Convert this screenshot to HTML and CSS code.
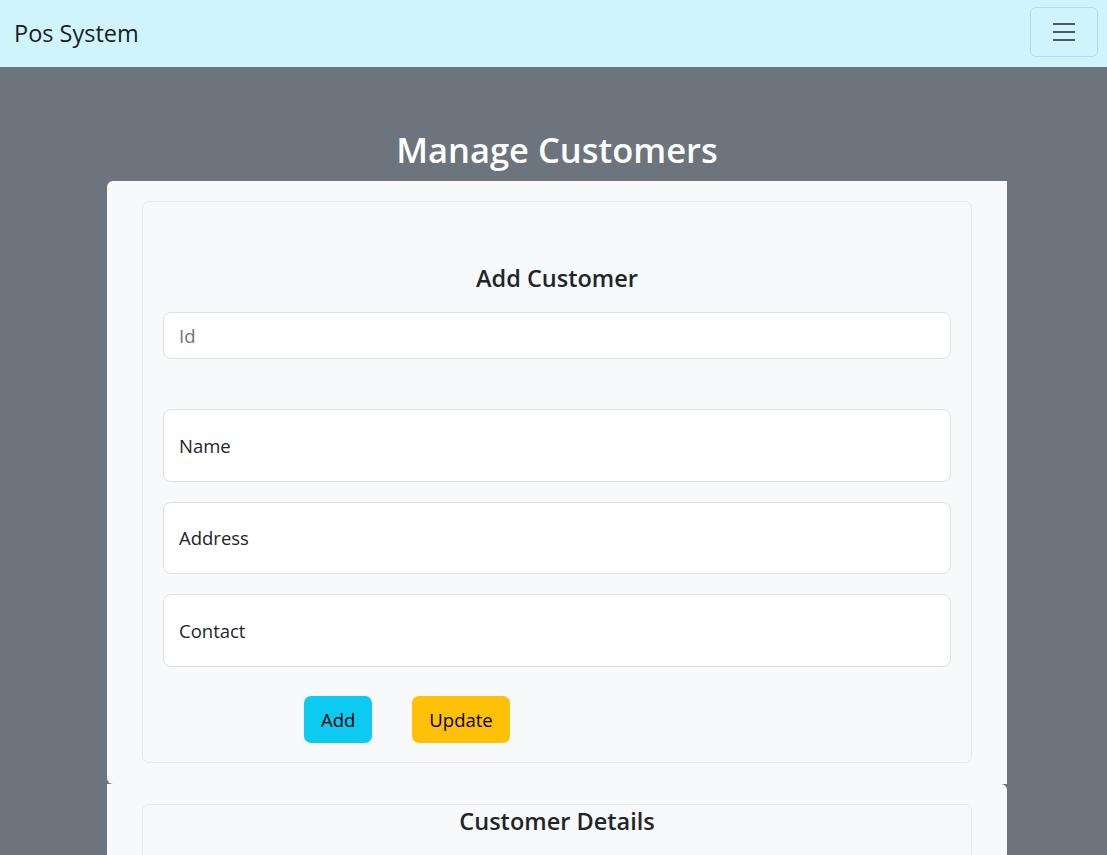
FILE: index.html
```html
<!DOCTYPE html>
<html lang="en">
<head>
<meta charset="utf-8">
<title>Pos System</title>
<link rel="stylesheet" href="styles.css">
</head>
<body>
<nav class="navbar">
  <a class="brand" href="#">Pos System</a>
  <button class="toggler" type="button" aria-label="Toggle navigation">
    <svg width="30" height="30" viewBox="0 0 30 30" aria-hidden="true">
      <path d="M4 7h22M4 15h22M4 23h22" stroke="rgba(33,37,41,0.75)" stroke-width="2" stroke-linecap="butt" fill="none"/>
    </svg>
  </button>
</nav>
<main class="main">
  <h1 class="page-title">Manage Customers</h1>
  <section class="panel panel-first">
    <div class="card">
      <h4 class="card-title card-title-add">Add Customer</h4>
      <input class="field field-id" type="text" placeholder="Id">
      <input class="field field-tall" type="text" placeholder="Name">
      <input class="field field-tall" type="text" placeholder="Address">
      <input class="field field-tall" type="text" placeholder="Contact">
      <div class="actions">
        <button class="btn btn-info" type="button">Add</button>
        <button class="btn btn-warning" type="button">Update</button>
      </div>
    </div>
  </section>
  <section class="panel panel-second">
    <div class="card card-details">
      <h4 class="card-title">Customer Details</h4>
    </div>
  </section>
</main>
</body>
</html>
```
FILE: styles.css
```css
* { box-sizing: border-box; }
html, body { margin: 0; padding: 0; }
body {
  background: #6c757d;
  font-family: "Open Sans", "Noto Sans", sans-serif;
  color: #212529;
  height: 855px;
  overflow: hidden;
}
.navbar {
  height: 67px;
  background: #cff4fc;
  display: flex;
  align-items: center;
  justify-content: space-between;
  padding: 0 9px 0 14px;
}
.brand {
  font-size: 23.5px;
  color: rgba(0,0,0,0.9);
  text-decoration: none;
  line-height: 1;
}
.toggler {
  width: 68px;
  height: 50px;
  background: transparent;
  border: 1px solid rgba(0,0,0,0.1);
  border-radius: 6px;
  display: flex;
  align-items: center;
  justify-content: center;
  padding: 0;
  align-self: flex-start;
  margin-top: 7px;
}
.toggler svg { display: block; }
.main {
  width: 900px;
  margin-left: 107px;
  padding-top: 60px;
}
.page-title {
  margin: 0 0 8px;
  text-align: center;
  color: #fff;
  font-size: 34.5px;
  font-weight: 600;
  line-height: 46px;
}
.panel {
  background: #f8f9fa;
  padding: 20px 35px 21px;
}
.panel-first { border-radius: 6px 0 0 6px; }
.panel-second { border-radius: 0 6px 0 0; height: 200px; }
.card {
  border: 1px solid #e6e8eb;
  border-radius: 7px;
  padding: 62px 20px 19px;
  display: flex;
  flex-direction: column;
}
.card-details { padding-top: 2px; height: 200px; }
.card-title {
  margin: 0;
  text-align: center;
  font-size: 23.5px;
  font-weight: 600;
  line-height: 29px;
  color: #212529;
}
.card-title-add { margin-bottom: 19px; }
.field {
  display: block;
  width: 100%;
  background: #fff;
  border: 1px solid #dee2e6;
  border-radius: 8px;
  font-family: inherit;
  font-size: 18.5px;
  padding: 0 15px;
  color: #212529;
  outline: none;
}
.field-id { height: 47px; margin-bottom: 50px; }
.field-id::placeholder { color: #6c757d; }
.field-tall { height: 72.6px; margin-bottom: 20px; }
.field-tall::placeholder { color: #212529; }
.actions {
  display: flex;
  gap: 40px;
  padding-left: 141px;
  margin-top: 9.5px;
}
.btn {
  height: 47px;
  border: none;
  border-radius: 7px;
  font-family: inherit;
  font-size: 18.5px;
  padding: 0 17px;
  color: #000;
  cursor: pointer;
}
.btn-info { background: #0dcaf0; }
.btn-warning { background: #ffc107; }
```
